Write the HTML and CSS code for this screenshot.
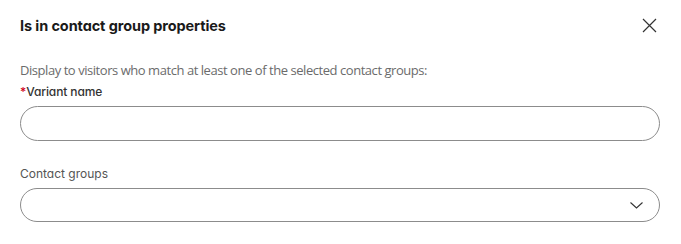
FILE: index.html
```html
<!DOCTYPE html>
<html>
<head>
<meta charset="utf-8">
<link rel="stylesheet" href="styles.css">
</head>
<body>
<div class="dialog">
  <div class="header">
    <h1 class="title">Is in contact group properties</h1>
    <button class="close" aria-label="Close">
      <svg width="15" height="15" viewBox="0 0 15 15"><path d="M1 1L14 14M14 1L1 14" stroke="#333" stroke-width="1.2" fill="none"/></svg>
    </button>
  </div>
  <p class="desc">Display to visitors who match at least one of the selected contact groups:</p>
  <div class="field">
    <label class="label strong"><span class="req">*</span>Variant name</label>
    <div class="input"></div>
  </div>
  <div class="field second">
    <label class="label">Contact groups</label>
    <div class="input select">
      <svg class="chev" width="13" height="7" viewBox="0 0 13 7"><path d="M0.5 0.5L6.5 6L12.5 0.5" stroke="#333" stroke-width="1.1" fill="none"/></svg>
    </div>
  </div>
</div>
</body>
</html>
```

FILE: styles.css
```css
* { box-sizing: border-box; }
html, body { margin: 0; padding: 0; background: #fff; }
.dialog {
  width: 681px;
  padding: 14px 21px 0 20px;
  font-family: "Inter", "Noto Sans", sans-serif;
}
.header {
  display: flex;
  align-items: center;
  justify-content: space-between;
  height: 22px;
}
.title {
  margin: 0;
  font-size: 14.5px;
  font-weight: 700;
  color: #1a1a1a;
  font-feature-settings: "cv11";
  letter-spacing: -0.1px;
}
.close {
  border: 0;
  background: none;
  padding: 0;
  margin-right: 3px;
  width: 15px;
  height: 15px;
  display: flex;
}
.desc {
  margin: 25px 0 0 0;
  font-family: "Open Sans", "Noto Sans", sans-serif;
  font-size: 13px;
  line-height: 18px;
  letter-spacing: -0.45px;
  color: #6b6b6b;
}
.label {
  display: block;
  font-size: 12px;
  line-height: 16px;
  color: #555;
  font-feature-settings: "cv11";
}
.label.strong { font-weight: 500; color: #333; letter-spacing: -0.1px; }
.req { color: #d0021b; }
.field { margin-top: 5px; }
.field.second { margin-top: 25px; }
.input {
  margin-top: 6px;
  height: 35px;
  width: 640px;
  border: 1px solid #8c8c8c;
  border-radius: 18px;
  display: flex;
  align-items: center;
  justify-content: flex-end;
}
.select { height: 34px; }
.chev { margin-right: 16px; }
```
